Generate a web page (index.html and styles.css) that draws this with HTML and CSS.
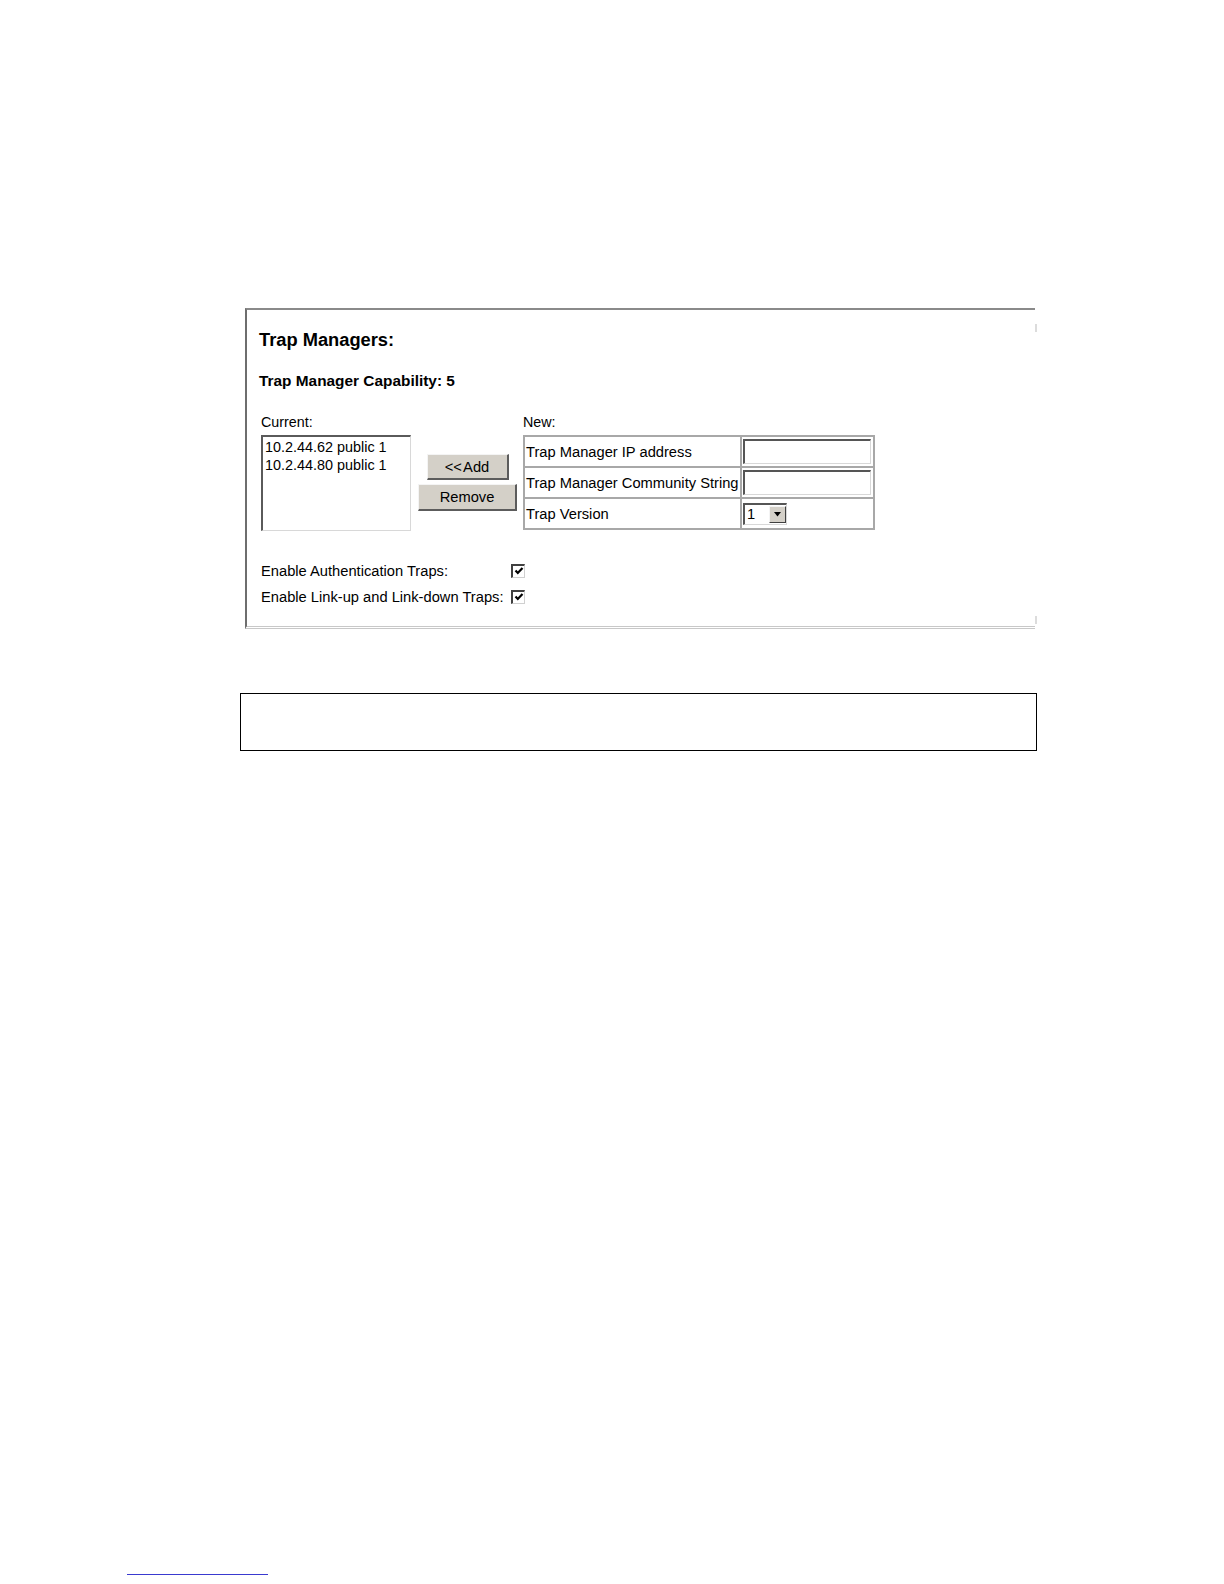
FILE: index.html
```html
<!DOCTYPE html>
<html>
<head>
<meta charset="utf-8">
<title>Trap Managers</title>
<link rel="stylesheet" href="styles.css">
</head>
<body>
<div class="page">
  <div class="frame">
    <h1 class="title">Trap Managers:</h1>
    <div class="capability">Trap Manager Capability: 5</div>
    <div class="main-row">
      <div class="col-current">
        <div class="label">Current:</div>
        <div class="listbox">
          <div class="list-item">10.2.44.62 public 1</div>
          <div class="list-item">10.2.44.80 public 1</div>
        </div>
      </div>
      <div class="col-buttons">
        <div class="btn btn-add">&lt;&lt;&#8202;Add</div>
        <div class="btn btn-remove">Remove</div>
      </div>
      <div class="col-new">
        <div class="label">New:</div>
        <table class="new-table">
          <tr>
            <td class="cell-label">Trap Manager IP address</td>
            <td class="cell-field"><div class="textbox"></div></td>
          </tr>
          <tr>
            <td class="cell-label">Trap Manager Community String</td>
            <td class="cell-field"><div class="textbox"></div></td>
          </tr>
          <tr>
            <td class="cell-label">Trap Version</td>
            <td class="cell-field">
              <div class="select">
                <span class="select-value">1</span>
                <span class="select-arrow"><svg width="9" height="5" viewBox="0 0 9 5"><path d="M1 0 L8 0 L4.5 4.5 Z" fill="#000"/></svg></span>
              </div>
            </td>
          </tr>
        </table>
      </div>
    </div>
    <div class="check-rows">
      <div class="check-row">
        <span class="check-label">Enable Authentication Traps:</span>
        <span class="checkbox"><svg width="10" height="10" viewBox="0 0 10 10"><path d="M1.5 4.5 L3.8 7 L8.5 2" stroke="#000" stroke-width="2.2" fill="none"/></svg></span>
      </div>
      <div class="check-row">
        <span class="check-label">Enable Link-up and Link-down Traps:</span>
        <span class="checkbox"><svg width="10" height="10" viewBox="0 0 10 10"><path d="M1.5 4.5 L3.8 7 L8.5 2" stroke="#000" stroke-width="2.2" fill="none"/></svg></span>
      </div>
    </div>
    <span class="tick tick-top"></span>
    <span class="tick tick-bottom"></span>
  </div>
  <div class="note"></div>
  <div class="footer-rule"></div>
</div>
</body>
</html>
```

FILE: styles.css
```css
html, body {
  margin: 0;
  padding: 0;
  background: #ffffff;
}

.page {
  width: 1224px;
  padding-top: 1px;
  font-family: "Liberation Sans", Arial, sans-serif;
  color: #000;
}

.frame {
  position: relative;
  margin: 307px 0 0 245px;
  width: 776px;
  height: 316px;
  border-top: 2px solid #8a8a8a;
  border-left: 2px solid #6e6e6e;
  border-bottom: 3px double #c8c8c8;
  padding-left: 12px;
  box-sizing: content-box;
}

.tick {
  position: absolute;
  right: -2px;
  width: 2px;
  background: #dcdcdc;
}
.tick-top { top: 14px; height: 8px; }
.tick-bottom { bottom: 2px; height: 8px; }

.title {
  margin: 0;
  padding-top: 19px;
  font-size: 18.3px;
  line-height: 22px;
  font-weight: bold;
}

.capability {
  margin-top: 21px;
  font-size: 15.4px;
  line-height: 17px;
  font-weight: bold;
}

.main-row {
  display: flex;
  margin-top: 25px;
  margin-left: 2px;
  align-items: flex-start;
}

.label {
  font-size: 14.3px;
  line-height: 17px;
  height: 21px;
}

.col-current {
  width: 150px;
}

.listbox {
  width: 150px;
  height: 96px;
  box-sizing: border-box;
  border-top: 2px solid #5a5a5a;
  border-left: 2px solid #5a5a5a;
  border-right: 1px solid #d8d8d8;
  border-bottom: 1px solid #d8d8d8;
  padding: 1px 0 0 2px;
  font-size: 14.4px;
  line-height: 18px;
}

.col-buttons {
  display: flex;
  flex-direction: column;
  align-items: center;
  width: 99px;
  margin-left: 7px;
  margin-top: 40px;
  gap: 4px;
}

.btn {
  box-sizing: border-box;
  background: #d4d0c8;
  border-top: 1px solid #f4f4f4;
  border-left: 1px solid #f4f4f4;
  border-right: 2px solid #5c5c5c;
  border-bottom: 2px solid #5c5c5c;
  font-size: 14.7px;
  text-align: center;
  display: flex;
  align-items: center;
  justify-content: center;
}

.btn-add {
  width: 82px;
  height: 26px;
}

.btn-remove {
  width: 99px;
  height: 27px;
}

.col-new {
  margin-left: 6px;
}

.new-table {
  border-collapse: collapse;
  border: 2px solid #a8a8a8;
}

.new-table td {
  border: 2px solid #a8a8a8;
  padding: 0;
  height: 29px;
  font-size: 14.7px;
  vertical-align: middle;
}

.cell-label {
  width: 214px;
  padding-left: 1px !important;
  white-space: nowrap;
}

.cell-field {
  width: 130px;
  padding-left: 1px !important;
}

.textbox {
  width: 128px;
  height: 25px;
  box-sizing: border-box;
  border-top: 2px solid #555;
  border-left: 2px solid #555;
  border-right: 1px solid #d8d8d8;
  border-bottom: 1px solid #d8d8d8;
  background: #fff;
}

.select {
  display: flex;
  align-items: center;
  width: 44px;
  height: 22px;
  box-sizing: border-box;
  border-top: 2px solid #555;
  border-left: 2px solid #555;
  border-right: 1px solid #d8d8d8;
  border-bottom: 1px solid #d8d8d8;
}

.select-value {
  flex: 1;
  font-size: 14.7px;
  padding-left: 2px;
}

.select-arrow {
  width: 17px;
  height: 17px;
  box-sizing: border-box;
  background: #d4d0c8;
  border-top: 1px solid #f4f4f4;
  border-left: 1px solid #f4f4f4;
  border-right: 1px solid #404040;
  border-bottom: 1px solid #404040;
  display: flex;
  align-items: center;
  justify-content: center;
}

.check-rows {
  margin-top: 31px;
  margin-left: 2px;
  display: flex;
  flex-direction: column;
  gap: 9px;
}

.check-row {
  display: flex;
  align-items: center;
  height: 17px;
  font-size: 14.7px;
}

.check-label {
  width: 250px;
}

.checkbox {
  width: 14px;
  height: 14px;
  box-sizing: border-box;
  border-top: 2px solid #404040;
  border-left: 2px solid #404040;
  border-right: 1px solid #d0d0d0;
  border-bottom: 1px solid #d0d0d0;
  display: flex;
  align-items: center;
  justify-content: center;
  background: #fff;
}

.note {
  margin: 64px 0 0 240px;
  width: 797px;
  height: 58px;
  box-sizing: border-box;
  border: 1px solid #000;
}

.footer-rule {
  margin: 823px 0 0 127px;
  width: 141px;
  height: 1px;
  background: #3a3ad0;
}
```
